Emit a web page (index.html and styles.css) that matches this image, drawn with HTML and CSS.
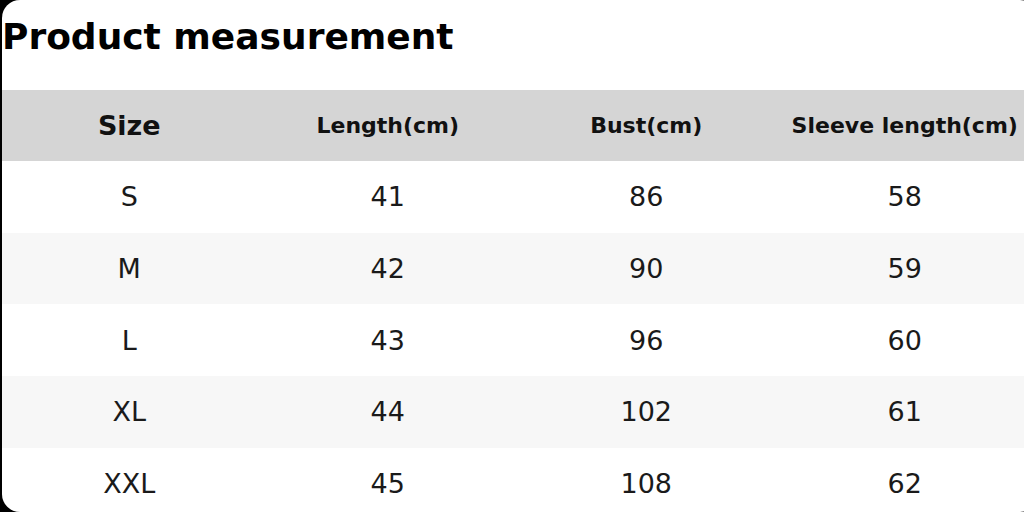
FILE: index.html
```html
<!DOCTYPE html>
<html>
<head>
<meta charset="utf-8">
<link rel="stylesheet" href="styles.css">
</head>
<body>
<div class="card">
  <h1 class="title">Product measurement</h1>
  <table class="sizes">
    <thead>
      <tr>
        <th class="size-head">Size</th>
        <th>Length(cm)</th>
        <th>Bust(cm)</th>
        <th>Sleeve length(cm)</th>
      </tr>
    </thead>
    <tbody>
      <tr><td>S</td><td>41</td><td>86</td><td>58</td></tr>
      <tr><td>M</td><td>42</td><td>90</td><td>59</td></tr>
      <tr><td>L</td><td>43</td><td>96</td><td>60</td></tr>
      <tr><td>XL</td><td>44</td><td>102</td><td>61</td></tr>
      <tr><td>XXL</td><td>45</td><td>108</td><td>62</td></tr>
    </tbody>
  </table>
</div>
</body>
</html>
```
FILE: styles.css
```css
html, body {
  margin: 0;
  padding: 0;
  background: #000;
  overflow: hidden;
}
body {
  width: 1024px;
  height: 512px;
  font-family: "DejaVu Sans", sans-serif;
  color: #111;
}
.card {
  margin-left: 2px;
  width: 1036px;
  height: 512px;
  background: #fff;
  border-radius: 18px;
  overflow: hidden;
}
.title {
  margin: 0;
  height: 90px;
  box-sizing: border-box;
  padding: 16px 0 0 0;
  font-size: 36px;
  font-weight: bold;
  line-height: 42px;
  color: #000;
}
.sizes {
  margin-left: -2px;
  width: 1034px;
  border-collapse: collapse;
  table-layout: fixed;
}
.sizes th {
  height: 71px;
  padding: 0;
  background: #d5d5d5;
  font-size: 22px;
  font-weight: bold;
  text-align: center;
  color: #111;
}
.sizes th.size-head {
  font-size: 27px;
}
.sizes td {
  height: 71.7px;
  padding: 0;
  text-align: center;
  font-size: 27px;
  color: #1a1a1a;
}
.sizes tbody tr:nth-child(even) td {
  background: #f7f7f7;
}
```
